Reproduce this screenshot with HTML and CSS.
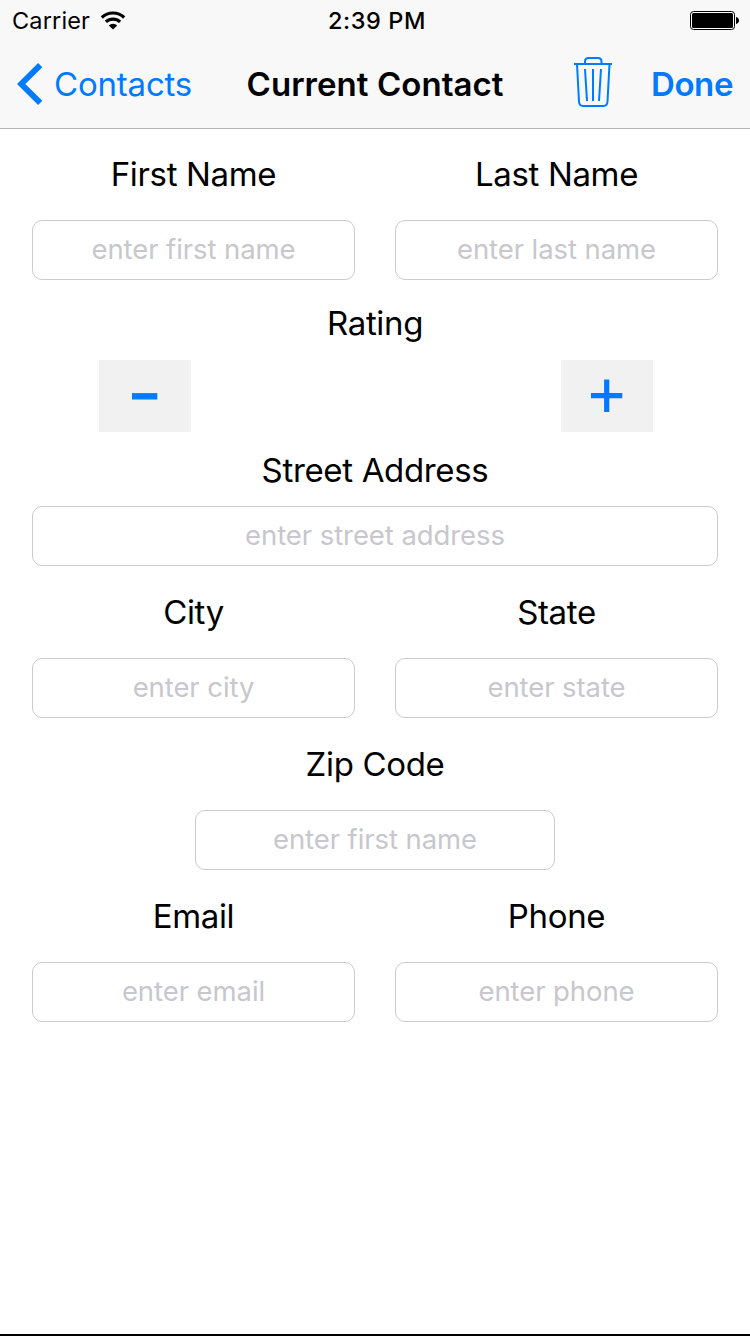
FILE: index.html
```html
<!DOCTYPE html>
<html lang="en">
<head>
<meta charset="utf-8">
<title>Current Contact</title>
<link rel="stylesheet" href="styles.css">
</head>
<body>
<div class="screen">
  <header class="top">
    <div class="status">
      <div class="carrier">
        <span>Carrier</span>
        <svg class="wifi" width="26" height="20" viewBox="0 0 26 20">
          <path d="M1.800 6.500a16.300 16.300 0 0 1 22.400 0M5.900 10.900a10.400 10.400 0 0 1 14.200 0" fill="none" stroke="#000" stroke-width="3.100"/>
          <path d="M13 18.500l-4.200-4.100a6 6 0 0 1 8.400 0z"/>
        </svg>
      </div>
      <div class="time">2:39 PM</div>
      <svg class="battery" width="50" height="20" viewBox="0 0 50 20">
        <rect x="0.500" y="0.500" width="44" height="18" rx="3" fill="#fff" stroke="#000"/>
        <rect x="2" y="2" width="41" height="15" rx="1.500"/>
        <path d="M46 6c4 .6 4 6.400 0 7z"/>
      </svg>
    </div>
    <nav class="nav">
      <a class="back">
        <svg width="26" height="42" viewBox="0 0 26 42"><path d="M23.200 2.100L4.200 21l19 18.900" fill="none" stroke="#007aff" stroke-width="5.900"/></svg>
        <span class="back-text">Contacts</span>
      </a>
      <h1 class="title">Current Contact</h1>
      <div class="actions">
        <svg class="trash" width="38" height="50" viewBox="0 0 38 50" fill="none" stroke="#007aff" stroke-width="2">
          <path d="M0 7h38M11 7V4.500Q11 1 14.500 1H24Q27.500 1 27.500 4.500V7M3 7L5 44.500Q5.300 49 9 49H29.500Q33.200 49 33.500 44.500L35.500 7M11 12L13 44M19 12V44M27 12L25 44"/>
        </svg>
        <a class="done">Done</a>
      </div>
    </nav>
  </header>
  <main class="form">
    <div class="row">
      <label class="field"><span class="label">First Name</span><input class="input" placeholder="enter first name"></label>
      <label class="field"><span class="label">Last Name</span><input class="input" placeholder="enter last name"></label>
    </div>
    <section class="rating">
      <span class="label">Rating</span>
      <div class="stepper">
        <button class="step" aria-label="Decrease"><svg width="92" height="72" viewBox="0 0 92 72"><path d="M33 36.300h25.300" stroke="#007aff" stroke-width="6.400"/></svg></button>
        <button class="step" aria-label="Increase"><svg width="92" height="72" viewBox="0 0 92 72"><path d="M30 35.700h31.300M45.700 19.500v32.500" stroke="#007aff" stroke-width="5.200"/></svg></button>
      </div>
    </section>
    <label class="field street"><span class="label">Street Address</span><input class="input" placeholder="enter street address"></label>
    <div class="row">
      <label class="field"><span class="label">City</span><input class="input" placeholder="enter city"></label>
      <label class="field"><span class="label">State</span><input class="input" placeholder="enter state"></label>
    </div>
    <label class="field zip"><span class="label">Zip Code</span><input class="input" placeholder="enter first name"></label>
    <div class="row">
      <label class="field"><span class="label">Email</span><input class="input" placeholder="enter email"></label>
      <label class="field"><span class="label">Phone</span><input class="input" placeholder="enter phone"></label>
    </div>
  </main>
</div>
</body>
</html>
```
FILE: styles.css
```css
* { box-sizing: border-box; }
body { margin: 0; background: #fff; color: #000; font-family: Inter, "Liberation Sans", sans-serif; }
.screen { height: 1336px; display: flex; flex-direction: column; border-bottom: 2px solid #000; }
.top { height: 129px; background: #f8f8f8; border-bottom: 1px solid #b2b2b2; }
.status { height: 40px; padding: 0 10px 0 12px; display: grid; grid-template-columns: 1fr auto 1fr; align-items: center; font-size: 23.500px; line-height: 40px; }
.carrier { display: flex; align-items: center; gap: 10px; letter-spacing: 0.150px; }
.carrier span, .time { padding-top: 1px; }
.time { padding-left: 2px; font-weight: 500; letter-spacing: 0.600px; }
.battery { justify-self: end; }
.nav { height: 88px; padding: 0 17px; display: grid; grid-template-columns: 1fr auto 1fr; align-items: center; font-size: 33px; line-height: 40px; }
.back { display: flex; align-items: center; gap: 11px; color: #007aff; }
.back-text { letter-spacing: -0.200px; }
.title { margin: 0; font-size: 33px; font-weight: 600; letter-spacing: 0.050px; }
.actions { display: flex; align-items: center; justify-content: flex-end; gap: 39px; }
.trash { margin-bottom: 4px; }
.done { color: #007aff; font-weight: 600; letter-spacing: -0.400px; }
.form { padding: 25px 32px 0; display: flex; flex-direction: column; }
.row { display: grid; grid-template-columns: 1fr 1fr; gap: 40px; }
.field { display: flex; flex-direction: column; gap: 26px; }
.label { display: block; height: 40px; text-align: center; font-size: 33px; line-height: 40px; letter-spacing: -0.340px; }
.input { width: 100%; height: 60px; padding: 0 14px 2px; border: 1px solid #cbcbcd; border-radius: 10px; background: #fff; font-family: inherit; font-size: 27.500px; letter-spacing: -0.080px; text-align: center; }
.input::placeholder { color: #c7c7cd; opacity: 1; }
.rating { margin-top: 23px; }
.stepper { margin-top: 17px; padding: 0 65px 0 67px; display: flex; justify-content: space-between; }
.step { width: 92px; height: 72px; padding: 0; border: 0; background: #f1f1f1; }
.step svg { display: block; }
.street { margin-top: 18px; margin-bottom: 26px; gap: 16px; }
.zip { width: 360px; margin: 26px auto; }
```
